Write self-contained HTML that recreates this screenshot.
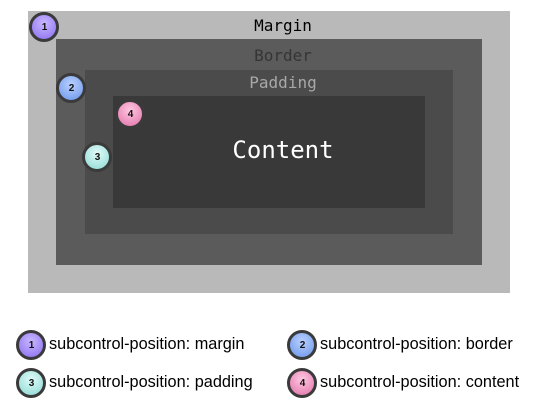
<!DOCTYPE html><html><head><style>
body{margin:0;width:540px;height:419px;background:#fff;position:relative;overflow:hidden}
.b{position:absolute}
.t{position:absolute;font-family:"DejaVu Sans Mono",monospace;text-align:center;width:540px;left:13px}
.c{position:absolute;width:24px;height:24px;border-radius:50%;border:3px solid #3a3a3a;box-sizing:content-box;font:bold 10px "Liberation Sans",sans-serif;color:#111;text-align:center;line-height:26px;margin:-15px 0 0 -15px;text-indent:1px}
.l{position:absolute;font:16.3px "Liberation Sans",sans-serif;color:#000}
</style></head><body>
<div class="b" style="left:28px;top:11px;width:482px;height:282px;background:#b9b9b9"></div>
<div class="b" style="left:56px;top:39px;width:426px;height:226px;background:#5b5b5b"></div>
<div class="b" style="left:85px;top:70px;width:368px;height:164px;background:#4b4b4b"></div>
<div class="b" style="left:113px;top:96px;width:312px;height:112px;background:#393939"></div>
<div class="t" style="top:16px;font-size:16px;color:#000">Margin</div>
<div class="t" style="top:46px;font-size:16px;color:#353535">Border</div>
<div class="t" style="top:73px;font-size:16px;color:#a8a8a8">Padding</div>
<div class="t" style="top:136px;font-size:24px;color:#fff">Content</div>
<div class="c" style="left:44px;top:27px;background:radial-gradient(circle at 50% 35%,#c8b8ff,#8a6cf0)">1</div>
<div class="c" style="left:71px;top:88px;background:radial-gradient(circle at 50% 35%,#b8d0ff,#6a94e8)">2</div>
<div class="c" style="left:97px;top:157px;background:radial-gradient(circle at 50% 35%,#e0fbf8,#8ad8d2)">3</div>
<div class="c" style="left:130px;top:114px;background:radial-gradient(circle at 50% 35%,#ffc8e0,#e070a8)">4</div>
<div class="c" style="left:31px;top:345px;background:radial-gradient(circle at 50% 35%,#c8b8ff,#8a6cf0)">1</div>
<div class="c" style="left:31px;top:383px;background:radial-gradient(circle at 50% 35%,#e0fbf8,#8ad8d2)">3</div>
<div class="c" style="left:302px;top:345px;background:radial-gradient(circle at 50% 35%,#b8d0ff,#6a94e8)">2</div>
<div class="c" style="left:302px;top:383px;background:radial-gradient(circle at 50% 35%,#ffc8e0,#e070a8)">4</div>
<div class="l" style="left:49px;top:335px">subcontrol-position: margin</div>
<div class="l" style="left:49px;top:373px">subcontrol-position: padding</div>
<div class="l" style="left:320px;top:335px">subcontrol-position: border</div>
<div class="l" style="left:320px;top:373px">subcontrol-position: content</div>
</body></html>
